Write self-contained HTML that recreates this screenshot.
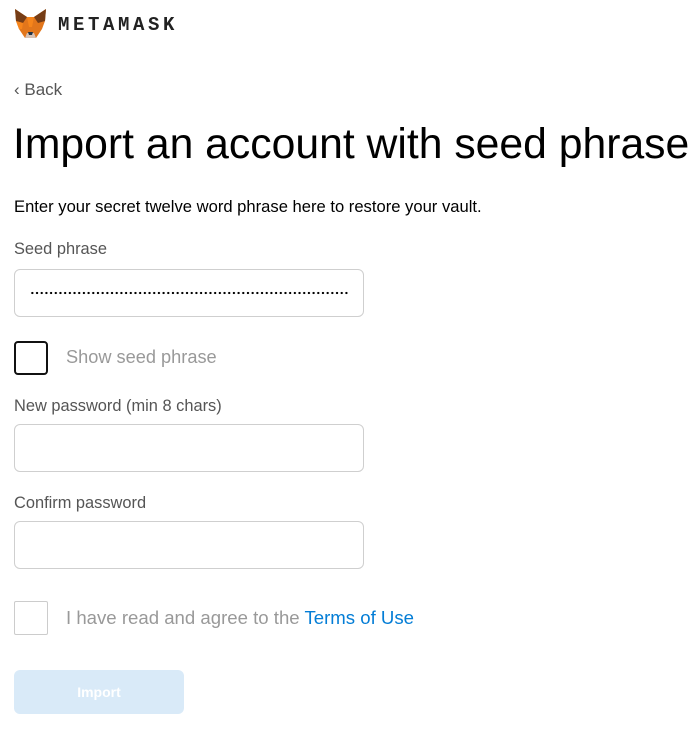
<!DOCTYPE html>
<html><head><meta charset="utf-8"><style>
*{margin:0;padding:0;box-sizing:border-box}
body{width:700px;height:747px;background:#fff;font-family:"Liberation Sans",sans-serif;position:relative;overflow:hidden;color:#000}
.a{position:absolute;white-space:nowrap}
.inp{position:absolute;left:14px;width:350px;height:48px;border:1px solid #cfcfcf;border-radius:6px}
.lbl{font-size:16.4px;color:#555}
</style></head><body>
<svg class="a" style="left:14px;top:9px" width="33" height="31" viewBox="0 0 33 31">
<polygon points="1,0 13,8 20,8 32,0 31,12 28,20 22,29 11,29 5,20 2,12" fill="#e2761b"/>
<polygon points="1,0 13,8 9,14 2,12" fill="#763d16"/>
<polygon points="32,0 20,8 24,14 31,12" fill="#763d16"/>
<polygon points="2,12 9,14 8,20 5,20" fill="#f6851b"/>
<polygon points="13,8 20,8 18,18 15,18" fill="#f6851b"/>
<polygon points="11,29 22,29 20,24 13,24" fill="#d7c1b3"/>
<polygon points="14,23 19,23 18,26 15,26" fill="#233447"/>
</svg>
<div class="a" style="left:58px;top:14px;font-family:'Liberation Mono',monospace;font-size:19px;font-weight:bold;letter-spacing:3.6px;color:#222">METAMASK</div>
<div class="a" style="left:14px;top:80px;font-size:17px;color:#555">‹ Back</div>
<div class="a" style="left:13px;top:120px;font-size:42.7px;color:#000">Import an account with seed phrase</div>
<div class="a" style="left:14px;top:197px;font-size:16.6px;color:#000">Enter your secret twelve word phrase here to restore your vault.</div>
<div class="a lbl" style="left:14px;top:240px">Seed phrase</div>
<div class="inp" style="top:269px"></div>
<div class="a" style="left:30px;top:291px;width:319px;height:4px;background:radial-gradient(circle,#000 1px,transparent 1.3px) 0 0/4.7px 4px repeat-x"></div>
<div class="a" style="left:14px;top:341px;width:34px;height:34px;border:2px solid #111;border-radius:4px"></div>
<div class="a" style="left:66px;top:347px;font-size:18.2px;color:#999">Show seed phrase</div>
<div class="a lbl" style="left:14px;top:397px">New password (min 8 chars)</div>
<div class="inp" style="top:424px"></div>
<div class="a lbl" style="left:14px;top:494px">Confirm password</div>
<div class="inp" style="top:521px"></div>
<div class="a" style="left:14px;top:601px;width:34px;height:34px;border:1px solid #ccc;border-radius:2px"></div>
<div class="a" style="left:66px;top:607px;font-size:18.6px;color:#999">I have read and agree to the <span style="color:#037dd6">Terms of Use</span></div>
<div class="a" style="left:14px;top:670px;width:170px;height:44px;background:#d9eaf8;border-radius:6px;color:#fff;font-size:14px;font-weight:bold;text-align:center;line-height:44px">Import</div>
</body></html>
